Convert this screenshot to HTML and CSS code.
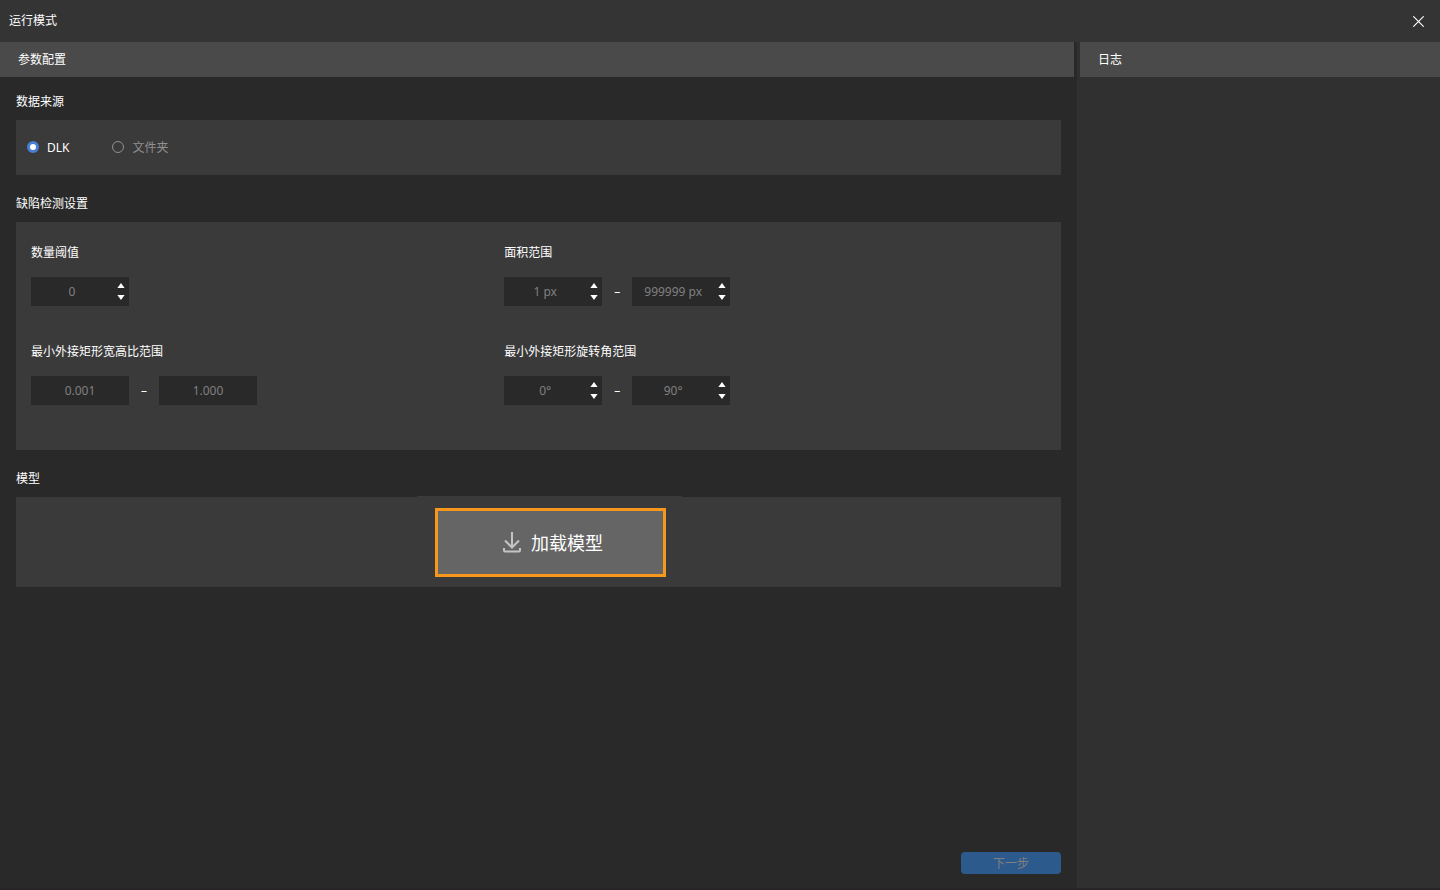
FILE: index.html
```html
<!DOCTYPE html>
<html lang="zh-CN">
<head>
<meta charset="utf-8">
<meta name="viewport" content="width=device-width, initial-scale=1">
<title>运行模式</title>
<link rel="stylesheet" href="styles.css">
</head>
<body>
<div class="window">
  <header class="titlebar">
    <h1 class="title">运行模式</h1>
    <button class="close" type="button" aria-label="关闭">
      <svg width="11" height="11" viewBox="0 0 11 11"><path d="M0.3 0.3L10.7 10.7M10.7 0.3L0.3 10.7" stroke="#fff" stroke-width="1.1" fill="none"/></svg>
    </button>
  </header>
  <div class="columns">
    <main class="config">
      <h2 class="panel-header">参数配置</h2>
      <form class="form">
        <section class="section">
          <h3 class="section-title">数据来源</h3>
          <div class="group source">
            <label class="choice"><input class="radio" type="radio" name="source" checked>DLK</label>
            <label class="choice muted"><input class="radio" type="radio" name="source">文件夹</label>
          </div>
        </section>

        <section class="section">
          <h3 class="section-title">缺陷检测设置</h3>
          <div class="group fields">
            <div class="field">
              <label class="field-label" for="count">数量阈值</label>
              <div class="range">
                <div class="box">
                  <input class="value" id="count" type="text" value="0">
                  <span class="spin">
                    <button class="step" type="button" aria-label="增加"><svg width="8" height="5" viewBox="0 0 8 5"><path d="M4 0L7.6 5H0.4Z" fill="#fff"/></svg></button>
                    <button class="step" type="button" aria-label="减少"><svg width="8" height="5" viewBox="0 0 8 5"><path d="M4 5L7.6 0H0.4Z" fill="#fff"/></svg></button>
                  </span>
                </div>
              </div>
            </div>
            <div class="field">
              <label class="field-label" for="area-min">面积范围</label>
              <div class="range">
                <div class="box">
                  <input class="value" id="area-min" type="text" value="1 px">
                  <span class="spin">
                    <button class="step" type="button" aria-label="增加"><svg width="8" height="5" viewBox="0 0 8 5"><path d="M4 0L7.6 5H0.4Z" fill="#fff"/></svg></button>
                    <button class="step" type="button" aria-label="减少"><svg width="8" height="5" viewBox="0 0 8 5"><path d="M4 5L7.6 0H0.4Z" fill="#fff"/></svg></button>
                  </span>
                </div>
                <span class="dash">–</span>
                <div class="box">
                  <input class="value" type="text" value="999999 px" aria-label="面积上限">
                  <span class="spin">
                    <button class="step" type="button" aria-label="增加"><svg width="8" height="5" viewBox="0 0 8 5"><path d="M4 0L7.6 5H0.4Z" fill="#fff"/></svg></button>
                    <button class="step" type="button" aria-label="减少"><svg width="8" height="5" viewBox="0 0 8 5"><path d="M4 5L7.6 0H0.4Z" fill="#fff"/></svg></button>
                  </span>
                </div>
              </div>
            </div>
            <div class="field">
              <label class="field-label" for="ratio-min">最小外接矩形宽高比范围</label>
              <div class="range">
                <div class="box"><input class="value" id="ratio-min" type="text" value="0.001"></div>
                <span class="dash">–</span>
                <div class="box"><input class="value" type="text" value="1.000" aria-label="宽高比上限"></div>
              </div>
            </div>
            <div class="field">
              <label class="field-label" for="angle-min">最小外接矩形旋转角范围</label>
              <div class="range">
                <div class="box">
                  <input class="value" id="angle-min" type="text" value="0°">
                  <span class="spin">
                    <button class="step" type="button" aria-label="增加"><svg width="8" height="5" viewBox="0 0 8 5"><path d="M4 0L7.6 5H0.4Z" fill="#fff"/></svg></button>
                    <button class="step" type="button" aria-label="减少"><svg width="8" height="5" viewBox="0 0 8 5"><path d="M4 5L7.6 0H0.4Z" fill="#fff"/></svg></button>
                  </span>
                </div>
                <span class="dash">–</span>
                <div class="box">
                  <input class="value" type="text" value="90°" aria-label="旋转角上限">
                  <span class="spin">
                    <button class="step" type="button" aria-label="增加"><svg width="8" height="5" viewBox="0 0 8 5"><path d="M4 0L7.6 5H0.4Z" fill="#fff"/></svg></button>
                    <button class="step" type="button" aria-label="减少"><svg width="8" height="5" viewBox="0 0 8 5"><path d="M4 5L7.6 0H0.4Z" fill="#fff"/></svg></button>
                  </span>
                </div>
              </div>
            </div>
          </div>
        </section>

        <section class="section">
          <h3 class="section-title">模型</h3>
          <div class="group model">
            <div class="model-slot">
              <button class="load" type="button">
                <svg width="18" height="21" viewBox="0 0 18 21" fill="none" stroke="#c4c4c4" stroke-width="2"><path d="M9 0V15M2 8.500L9 15.500L16 8.500M1 16V18.500Q1 19.500 2 19.500H16Q17 19.500 17 18.500V16"/></svg>
                加载模型
              </button>
            </div>
          </div>
        </section>

        <footer class="actions"><button class="next" type="button" disabled>下一步</button></footer>
      </form>
    </main>
    <aside class="log">
      <h2 class="panel-header">日志</h2>
    </aside>
  </div>
</div>
</body>
</html>
```
FILE: styles.css
```css
* {
  box-sizing: border-box;
}

body {
  margin: 0;
  background: #292929;
  color: #fff;
  font: 12px/18px "Noto Sans", "Noto Sans CJK SC", sans-serif;
}

h1, h2, h3 {
  margin: 0;
  font-size: 12px;
  font-weight: 400;
}

button, input {
  margin: 0;
  padding: 0;
  border: 0;
  font: inherit;
  color: inherit;
}

button {
  background: none;
}

svg {
  display: block;
}

.window {
  display: flex;
  flex-direction: column;
  min-height: 100vh;
  border-bottom: 2px solid #262626;
}

.titlebar {
  display: flex;
  align-items: center;
  justify-content: space-between;
  height: 42px;
  padding: 0 8px 0 9px;
  background: #343434;
}

.title {
  line-height: 20px;
}

.close {
  display: grid;
  place-items: center;
  width: 27px;
  height: 27px;
}

.columns {
  display: grid;
  grid-template-columns: 1fr 363px;
  flex: 1;
}

.config {
  display: flex;
  flex-direction: column;
}

.config .panel-header {
  margin-right: 3px;
}

.log {
  padding-left: 3px;
  background: #303030;
}

.panel-header {
  height: 35px;
  padding-left: 18px;
  background: #4a4a4a;
  line-height: 36px;
}

.form {
  display: flex;
  flex-direction: column;
  flex: 1;
  padding: 16px 16px 14px;
}

.section {
  margin-bottom: 20px;
}

.section-title {
  margin-bottom: 9px;
}

.group {
  background: #3a3a3a;
}

.source {
  display: flex;
  gap: 43px;
  height: 55px;
  padding-left: 11px;
}

.choice {
  display: flex;
  align-items: center;
  gap: 8px;
}

.muted {
  color: #909090;
}

.radio {
  appearance: none;
  width: 12px;
  height: 12px;
  margin-bottom: 1px;
  border: 1px solid #909090;
  border-radius: 50%;
}

.radio:checked {
  border: 3px solid #477fd2;
  background: #fff;
}

.fields {
  display: grid;
  grid-template-columns: 7fr 8fr;
  row-gap: 37px;
  padding: 22px 16px 45px 15px;
}

.field-label {
  display: block;
  margin-bottom: 15px;
}

.range {
  display: flex;
  align-items: center;
}

.box {
  display: flex;
  width: 98px;
  height: 29px;
  background: #292929;
}

.value {
  flex: 1;
  min-width: 0;
  background: none;
  color: #808080;
  text-align: center;
}

.spin {
  display: flex;
  flex-direction: column;
  justify-content: center;
  width: 16px;
}

.step {
  display: grid;
  justify-content: start;
  align-content: center;
  height: 12px;
  padding-left: 4px;
}

.dash {
  width: 30px;
  text-align: center;
}

.model {
  display: flex;
  justify-content: center;
  padding-left: 22px;
}

.model-slot {
  margin-top: -1px;
  padding: 12px 16px 10px 18px;
  background: #3a3a3a;
}

.load {
  display: flex;
  align-items: center;
  justify-content: center;
  gap: 10px;
  width: 231px;
  height: 69px;
  padding-left: 5px;
  border: 3px solid #f7981d;
  background: #656565;
  font-size: 18px;
}

.actions {
  display: flex;
  justify-content: flex-end;
  margin-top: auto;
}

.next {
  width: 100px;
  height: 22px;
  padding-top: 2px;
  border-radius: 4px;
  background: #2c5a8c;
  color: #808080;
}
```
